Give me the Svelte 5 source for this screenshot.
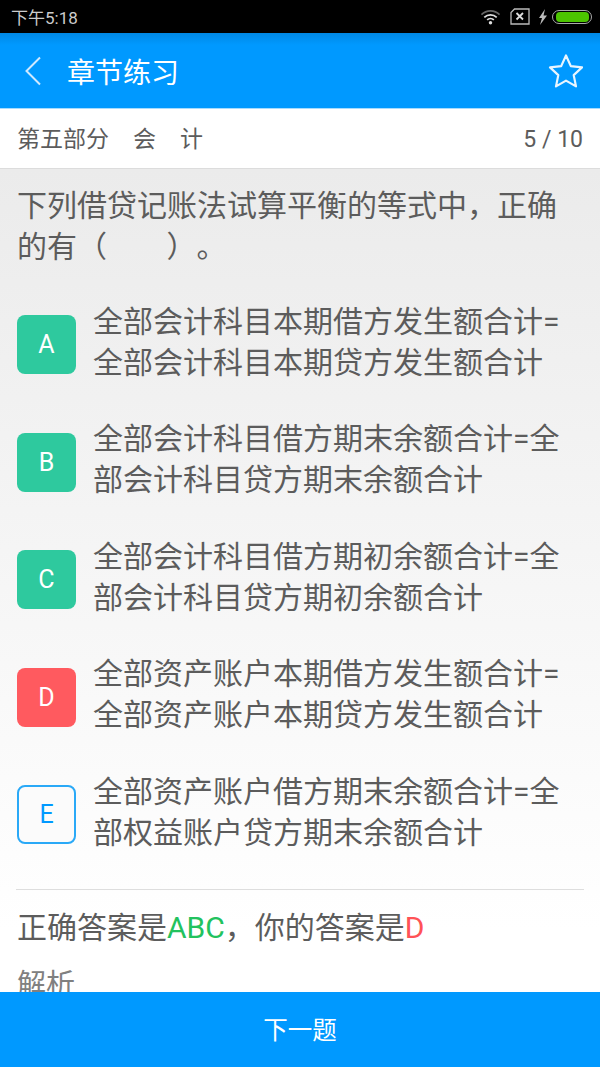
<script>
	const options = [
		{ key: 'A', state: 'right', lines: ['全部会计科目本期借方发生额合计=', '全部会计科目本期贷方发生额合计'] },
		{ key: 'B', state: 'right', lines: ['全部会计科目借方期末余额合计=全', '部会计科目贷方期末余额合计'] },
		{ key: 'C', state: 'right', lines: ['全部会计科目借方期初余额合计=全', '部会计科目贷方期初余额合计'] },
		{ key: 'D', state: 'wrong', lines: ['全部资产账户本期借方发生额合计=', '全部资产账户本期贷方发生额合计'] },
		{ key: 'E', state: 'idle', lines: ['全部资产账户借方期末余额合计=全', '部权益账户贷方期末余额合计'] }
	];
</script>

<div class="phone">
	<div class="status">
		<span class="time">下午5:18</span>
		<div class="status-icons">
			<svg class="wifi" width="21" height="16" viewBox="0 0 22 16" fill="none" stroke="#ddd">
				<path d="M1.5 5.5a13.5 13.5 0 0 1 19 0" stroke-width="1.6" stroke="#666" />
				<path d="M4.5 8.5a9.3 9.3 0 0 1 13 0" stroke-width="1.8" />
				<path d="M7.5 11a5 5 0 0 1 7 0" stroke-width="1.8" />
				<circle cx="11" cy="14" r="1.8" fill="#ddd" stroke="none" />
			</svg>
			<svg class="sim" width="20" height="17" viewBox="0 0 20 17" fill="none" stroke="#bbb">
				<path d="M4.5 1h14.5v15H1V4.500z" stroke-width="1.300" />
				<path d="M6.500 5l6.500 6.500M13 5l-6.500 6.500" stroke="#ddd" stroke-width="1.800" />
			</svg>
			<svg class="bolt" width="10" height="16" viewBox="0 0 10 16">
				<path d="M7 0L1 9h3l-2 7 7-9.500H5.500z" fill="#bbb" />
			</svg>
			<div class="battery"><div class="charge"></div></div>
		</div>
	</div>

	<header class="appbar">
		<svg class="back" width="18" height="30" viewBox="0 0 18 30" fill="none">
			<path d="M16 1.500L2.500 15 16 28.500" stroke="#cfe9ff" stroke-width="2" />
		</svg>
		<h1>章节练习</h1>
		<svg class="star" width="36" height="35" viewBox="0 0 36 35" fill="none">
			<path d="M18 2.500l4.800 10.600 11.200 1.300-8.300 7.700 2.300 11.300-10-5.800-10 5.800 2.300-11.300L2 14.400l11.200-1.300z" stroke="#e8f5ff" stroke-width="2.200" stroke-linejoin="round" />
		</svg>
	</header>

	<div class="section">
		<div class="crumbs">
			<span>第五部分</span>
			<span>会</span>
			<span>计</span>
		</div>
		<span class="count">5 / 10</span>
	</div>

	<main class="body">
		<p class="question">下列借贷记账法试算平衡的等式中，正确的有（&nbsp;&nbsp;&nbsp;&nbsp;&nbsp;&nbsp;&nbsp;&nbsp;）。</p>

		<ul class="options">
			{#each options as opt}
				<li class="option">
					<div class="badge {opt.state}">{opt.key}</div>
					<div class="text">
						{#each opt.lines as line}
							<div>{line}</div>
						{/each}
					</div>
				</li>
			{/each}
		</ul>

		<div class="answer">
			正确答案是<span class="green">ABC</span>，你的答案是<span class="red">D</span>
		</div>
		<div class="analysis">解析</div>
	</main>

	<button class="next">下一题</button>
</div>

<style>
	:global(body) {
		margin: 0;
	}
	.phone {
		width: 600px;
		height: 1067px;
		display: flex;
		flex-direction: column;
		overflow: hidden;
		font-family: "Roboto", "Noto Sans CJK SC", sans-serif;
		color: #5c5c5c;
		text-spacing-trim: space-all;
	}
	.status {
		height: 33px;
		flex: none;
		background: #000;
		display: flex;
		align-items: center;
		justify-content: space-between;
		padding: 0 8px 0 11px;
		color: #ccc;
		font-size: 17px;
	}
	.status-icons {
		display: flex;
		align-items: center;
	}
	.wifi {
		margin-right: 9px;
	}
	.sim {
		margin-right: 8px;
	}
	.bolt {
		margin-right: 4px;
	}
	.battery {
		width: 33px;
		height: 10px;
		border: 1px solid #aaa;
		border-radius: 7px;
		padding: 1px 2px 1px 3px;
		box-sizing: content-box;
	}
	.charge {
		height: 100%;
		background: #4cc400;
		border-radius: 4px;
	}
	.appbar {
		height: 76px;
		flex: none;
		display: flex;
		align-items: center;
		background: linear-gradient(#0088e4, #0099ff 12px);
		border-bottom: 1px solid #a6dcff;
		box-sizing: border-box;
		padding: 0 16px 0 24px;
	}
	.back {
		margin-right: 26px;
	}
	h1 {
		margin: 0 0 0 -1px;
		flex: 1;
		font-size: 28px;
		font-weight: 400;
		color: #fff;
	}
	.section {
		height: 60px;
		flex: none;
		box-sizing: border-box;
		background: #fff;
		border-bottom: 1px solid #dcdcdc;
		display: flex;
		align-items: center;
		justify-content: space-between;
		padding: 0 17px 0 17px;
		font-size: 23px;
	}
	.crumbs {
		display: flex;
		gap: 24px;
		padding-bottom: 3px;
	}
	.count {
		padding-top: 2px;
	}
	.body {
		flex: 1;
		min-height: 0;
		overflow: hidden;
		background: linear-gradient(#ebebeb, #fff 760px);
		padding: 16px 16px 0;
	}
	.question {
		margin: 0 0 0 1px;
		font-size: 30px;
		line-height: 41px;
	}
	.options {
		list-style: none;
		margin: 16px 0 0;
		padding: 0;
		font-size: 30px;
		line-height: 41px;
	}
	.option {
		display: flex;
		align-items: center;
		height: 117.500px;
		padding-left: 1px;
	}
	.badge {
		width: 59px;
		height: 59px;
		box-sizing: border-box;
		flex: none;
		border-radius: 8px;
		display: flex;
		align-items: center;
		justify-content: center;
		font-size: 25px;
		color: #fff;
		margin: 6px 18px 0 0;
	}
	.text {
		margin-left: -1px;
	}
	.right {
		background: #2ec99e;
	}
	.wrong {
		background: #ff5a5f;
	}
	.idle {
		border: 2px solid #2aa9f7;
		color: #0099ff;
		background: #fbfbfb;
	}
	.answer {
		margin-top: 18px;
		border-top: 1px solid #dedede;
		padding: 17px 0 0 1px;
		font-size: 30px;
		line-height: 41px;
	}
	.green {
		color: #22c25e;
	}
	.red {
		color: #ff5256;
	}
	.analysis {
		margin: 17px 0 0 1px;
		font-size: 29px;
		line-height: 41px;
		color: #808080;
	}
	.next {
		height: 75px;
		flex: none;
		border: 0;
		padding: 0 0 3px;
		background: #0099ff;
		color: #fff;
		font-family: inherit;
		font-size: 24.500px;
	}
</style>
